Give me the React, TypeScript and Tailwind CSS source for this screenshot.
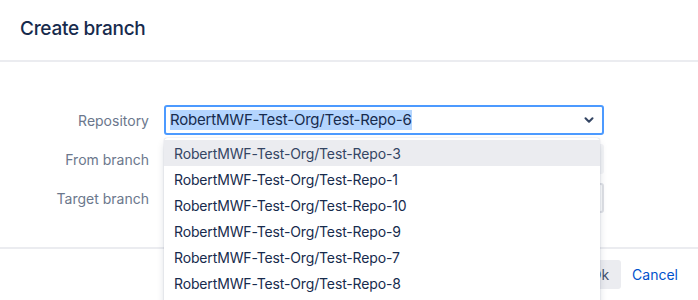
import { ChevronDown } from "lucide-react";

const repos = [
  "RobertMWF-Test-Org/Test-Repo-3",
  "RobertMWF-Test-Org/Test-Repo-1",
  "RobertMWF-Test-Org/Test-Repo-10",
  "RobertMWF-Test-Org/Test-Repo-9",
  "RobertMWF-Test-Org/Test-Repo-7",
  "RobertMWF-Test-Org/Test-Repo-8",
];

export default function App() {
  return (
    <div
      className="relative h-[300px] w-[698px] overflow-hidden bg-white"
      style={{ fontFamily: "Inter, 'Liberation Sans', sans-serif" }}
    >
      {/* Header */}
      <div className="flex h-[62px] items-center border-b-2 border-[#ebecf0] pb-[2px] pl-5">
        <h1 className="text-[19px] font-medium tracking-[-0.015em] text-[#172b4d]">Create branch</h1>
      </div>

      {/* Form */}
      <div className="flex h-[185px] flex-col gap-[9px] pt-[43px]">
        <div className="flex items-center">
          <label className="w-[149px] text-right text-[14px] text-[#6b778c]">Repository</label>
          <div className="relative ml-[15px] w-[440px]">
            <div className="flex h-[30px] items-center justify-between rounded-[3px] border-2 border-[#4c9aff] bg-white pl-[4px] pr-[6px]">
              <span className="bg-[#b4d5fe] text-[15px] leading-[20px] tracking-[-0.013em] text-[#172b4d]">
                RobertMWF-Test-Org/Test-Repo-6
              </span>
              <ChevronDown className="size-[14px] text-[#344563]" strokeWidth={3.5} />
            </div>

            {/* Dropdown */}
            <div className="absolute left-0 top-[33px] z-10 h-[180px] w-[436px] rounded-[3px] bg-white pt-[2px] shadow-[0_4px_8px_-2px_rgba(9,30,66,0.25),0_0_1px_rgba(9,30,66,0.31)]">
              {repos.map((r, i) => (
                <div
                  key={r}
                  className={
                    i === 0
                      ? "flex h-[26px] items-center bg-[#ebecf0] pl-[10px] text-[14px] tracking-[-0.01em] text-[#344563]"
                      : "flex h-[26px] items-center pl-[10px] text-[14px] tracking-[-0.01em] text-[#172b4d]"
                  }
                >
                  {r}
                </div>
              ))}
            </div>
          </div>
        </div>

        <div className="flex items-center">
          <label className="w-[149px] text-right text-[14px] text-[#6b778c]">From branch</label>
          <div className="ml-[15px] h-[30px] w-[440px] rounded-[3px] bg-[#f4f5f7]" />
        </div>

        <div className="flex items-center">
          <label className="w-[149px] text-right text-[14px] text-[#6b778c]">Target branch</label>
          <div className="ml-[15px] h-[30px] w-[440px] rounded-[3px] border-2 border-[#dfe1e6] bg-[#fafbfc]" />
        </div>
      </div>

      {/* Footer */}
      <div className="flex items-center justify-end gap-[3px] border-t-2 border-[#ebecf0] pr-[12px] pt-[11px]">
        <button className="h-[29px] rounded-[3px] bg-[#ebecf0] px-[12px] text-[14px] text-[#42526e]">Ok</button>
        <button className="h-[29px] rounded-[3px] px-[8px] text-[14px] text-[#0052cc]">Cancel</button>
      </div>
    </div>
  );
}
